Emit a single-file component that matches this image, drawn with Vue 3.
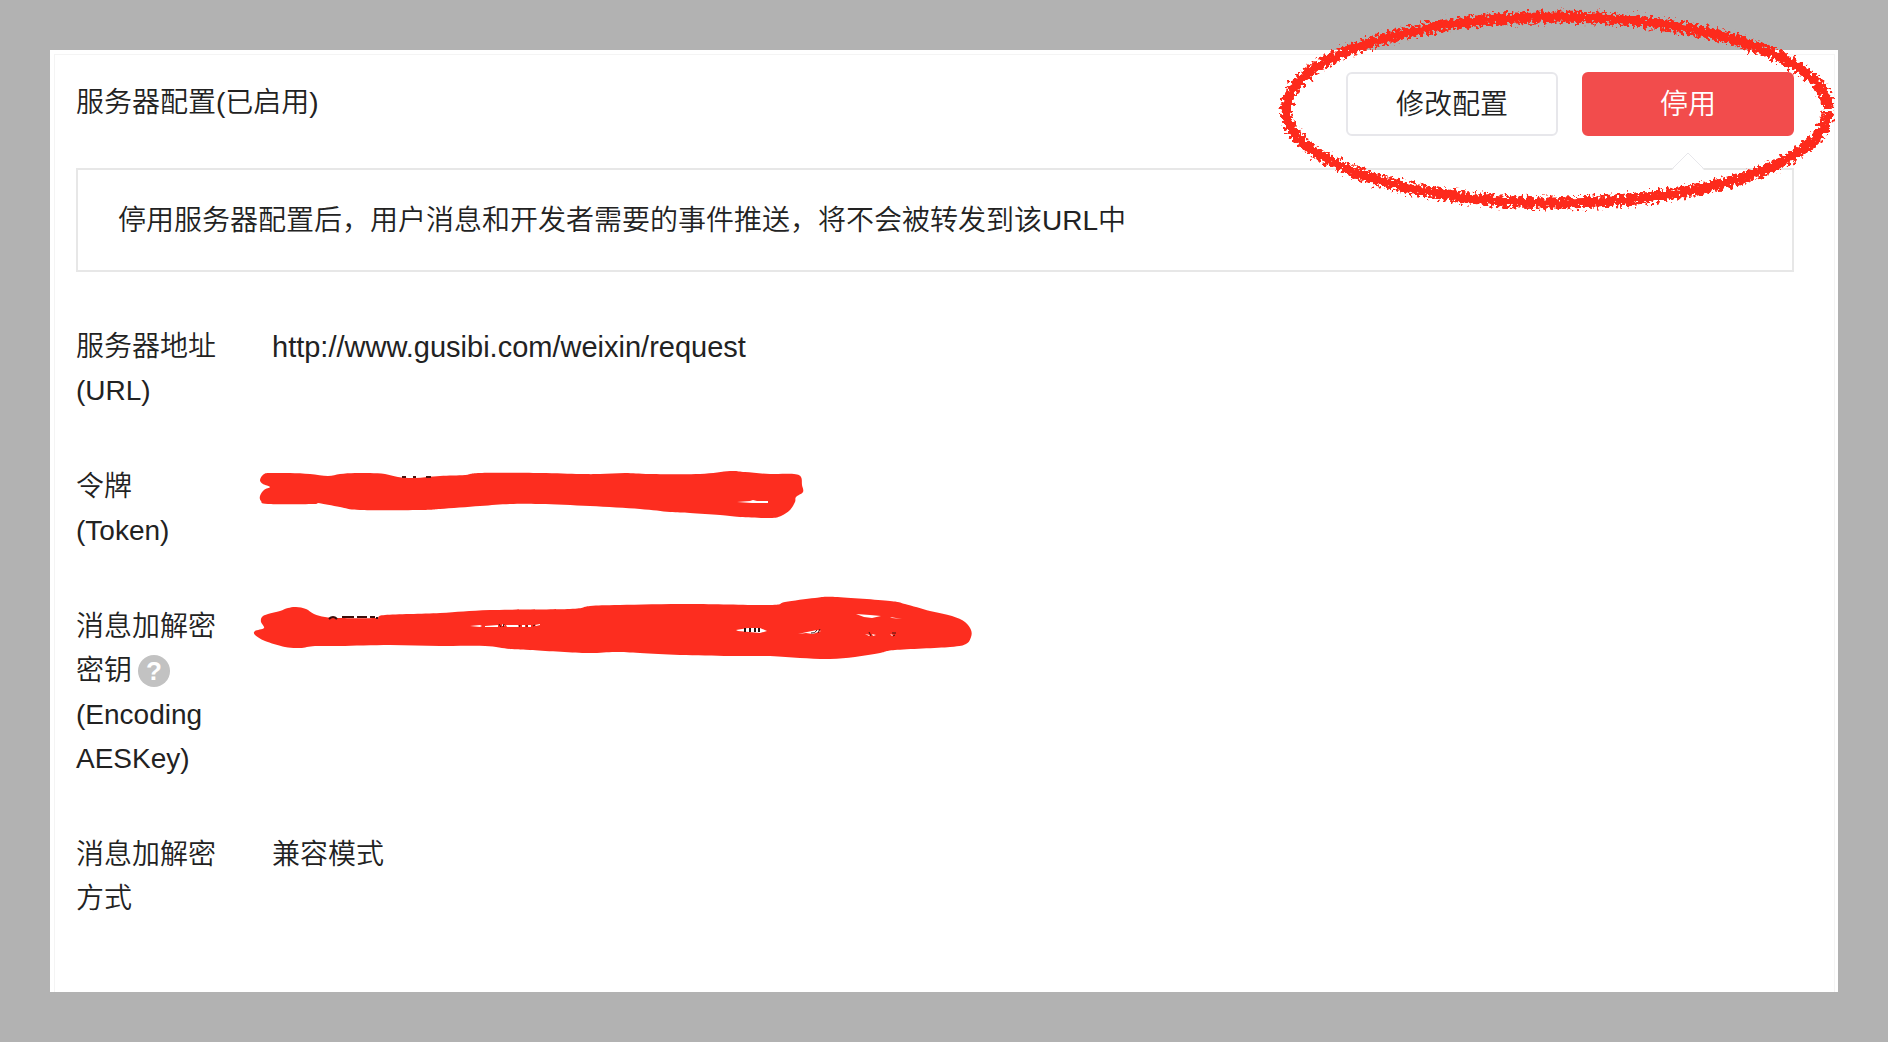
<script setup>
// Closed smooth outline through a list of points
function outline(points) {
  const n = points.length
  const at = (i) => points[(i + n) % n]
  let d = `M${points[0][0]} ${points[0][1]}`
  for (let i = 0; i < n; i++) {
    const [a, b, c, e] = [at(i - 1), at(i), at(i + 1), at(i + 2)]
    const c1 = [b[0] + (c[0] - a[0]) / 6, b[1] + (c[1] - a[1]) / 6]
    const c2 = [c[0] - (e[0] - b[0]) / 6, c[1] - (e[1] - b[1]) / 6]
    d += `C${c1.join(' ')} ${c2.join(' ')} ${c.join(' ')}`
  }
  return d + 'Z'
}

const tokenMark = outline([
  [20, 30], [24, 24], [32, 23], [50, 23], [70, 24], [88, 26], [100, 24], [115, 23], [130, 23], [145, 24],
  [158, 27], [175, 28], [200, 26], [225, 25], [240, 23], [300, 23], [340, 24], [360, 24], [385, 23],
  [410, 24], [460, 24], [490, 21], [505, 22], [530, 24], [554, 24], [561, 27], [562, 35], [563, 42],
  [556, 47], [555, 52], [550, 60], [541, 66], [530, 68], [500, 67], [480, 65], [450, 63], [430, 62],
  [400, 59], [350, 56], [300, 54], [270, 54], [240, 56], [200, 59], [180, 60], [120, 60], [100, 57],
  [78, 53], [74, 54], [28, 54], [21, 51], [20, 46], [24, 40], [30, 37], [23, 34],
])

const keyMark = outline([
  [21, 42], [22, 37], [28, 34], [40, 31], [48, 28], [56, 27], [66, 29], [74, 34], [85, 37], [100, 38],
  [135, 38], [145, 35], [200, 33], [250, 30], [330, 29], [350, 26], [380, 25], [450, 24], [530, 25],
  [545, 22], [575, 18], [595, 17], [650, 21], [665, 24], [690, 31], [712, 36], [725, 42], [731, 50],
  [731, 57], [726, 64], [710, 67], [655, 70], [640, 73], [615, 77], [590, 79], [560, 78], [530, 76],
  [490, 76], [440, 75], [400, 73], [375, 72], [345, 73], [290, 70], [270, 69], [245, 66],
  [200, 66], [150, 65], [100, 66], [75, 66], [60, 68], [45, 67], [25, 61], [15, 55], [15, 51], [24, 48],
])
</script>

<template>
  <div class="page" lang="zh-CN">
    <main class="card">
      <header class="head">
        <h1 class="title">服务器配置(已启用)</h1>
        <div class="actions">
          <button type="button" class="btn">修改配置</button>
          <button type="button" class="btn btn-warn">停用</button>
          <svg class="ring" width="580" height="220" viewBox="0 0 580 220" aria-hidden="true">
            <defs>
              <filter id="crayon" x="-5%" y="-10%" width="110%" height="120%">
                <feTurbulence type="fractalNoise" baseFrequency="0.3" numOctaves="2" seed="7" result="n" />
                <feDisplacementMap in="SourceGraphic" in2="n" scale="14" xChannelSelector="R" yChannelSelector="G" />
              </filter>
            </defs>
            <path
              d="M561 108A271 93 0 1 0 561 112"
              fill="none"
              stroke="#fd2a1b"
              stroke-width="11"
              filter="url(#crayon)"
            />
          </svg>
        </div>
      </header>

      <section class="notice">
        <svg class="arrow" width="32" height="18" viewBox="0 0 32 18" aria-hidden="true">
          <path d="M0 18 16 1 32 18Z" fill="#fff" />
          <path d="M0 17 16 1 32 17" fill="none" stroke="#e7e7eb" stroke-width="1" />
        </svg>
        <p>停用服务器配置后，用户消息和开发者需要的事件推送，将不会被转发到该URL中</p>
      </section>

      <dl class="list">
        <div class="row">
          <dt>服务器地址(URL)</dt>
          <dd class="url">http://www.gusibi.com/weixin/request</dd>
        </div>
        <div class="row">
          <dt>令牌 (Token)</dt>
          <dd>
            <svg class="mark" width="580" height="90" viewBox="0 0 580 90" role="img" aria-label="已隐藏">
              <path :d="tokenMark" fill="#fd2d1f" />
              <path d="M497 52 510 51 513 50 517 51 528 51 528 53 512 53Z" fill="#fff" />
              <path d="M162 27h4M173 27h3M186 27h5" stroke="#4a1410" stroke-width="2" />
            </svg>
          </dd>
        </div>
        <div class="row">
          <dt>
            <span>消息加解密</span><wbr /><span>密钥</span><button type="button" class="help" aria-label="帮助">?</button>
            <span>(Encoding AESKey)</span>
          </dt>
          <dd>
            <svg class="mark mark-key" width="750" height="100" viewBox="0 0 750 100" role="img" aria-label="已隐藏">
              <path :d="keyMark" fill="#fd2d1f" />
              <g fill="none" stroke="#3a0f0c" stroke-width="2">
                <path d="M89 39q4-4 8 0M102 37h12M117 37h10M130 37h5M137 37v2" />
              </g>
              <path d="M230 46l10-1 2 1-2 1ZM245 46l13-1v2h-13ZM262 46v-2l3 2ZM266 45h12l1 2h-12ZM282 45h3v2h-3ZM288 45h3v2h-3ZM295 45l5-1v1l-4 1Z" fill="#fff" />
              <path d="M259 44l2 3M264 44l-1 3M279 47l1-2M287 47v-2M293 46l2-1" fill="none" stroke="#4a1410" />
              <path d="M496 50 508 48 520 48 527 51 520 53 498 51Z" fill="#fff" />
              <path d="M505 48v4M510 48v4M515 48v4M519 48v4" fill="none" stroke="#27100e" stroke-width="2" />
              <path d="M558 54 567 52 577 50 581 51 573 54 566 53Z" fill="#fff" />
              <path d="M571 53q4 1 6-3M580 49l-2 4" fill="none" stroke="#4a1410" />
              <path d="M616 34 630 35 641 36 632 38 624 37ZM650 37l12 2-10-1Z" fill="#fff" />
              <path d="M625 54l5 1-1 1ZM632 54l4 1-3 1ZM650 54l3 1-1 1Z" fill="#fff" />
              <path d="M629 52l2 4M652 53h4M653 56l2-1" fill="none" stroke="#4a1410" />
            </svg>
          </dd>
        </div>
        <div class="row">
          <dt>消息加解密方式</dt>
          <dd>兼容模式</dd>
        </div>
      </dl>
    </main>
  </div>
</template>

<style>
body {
  margin: 0;
  background: #b2b2b2;
}
</style>

<style scoped>
.page {
  box-sizing: border-box;
  min-height: 100vh;
  padding: 50px;
  background: #b2b2b2;
  color: #222;
  font-family: "Liberation Sans", "Noto Sans CJK SC", sans-serif;
  font-size: 28px;
  font-weight: 350;
  line-height: 44px;
  overflow: hidden;
}
.card {
  padding: 22px 44px 71px 26px;
  background: #fff;
  box-shadow: inset 0 4px #fff, inset 4px 0 #fff, inset -3px 0 #fff, inset 0 5px #f4f4f4, inset 5px 0 #f4f4f4,
    inset -4px 0 #f4f4f4;
}
.head {
  display: flex;
  justify-content: space-between;
  align-items: center;
}
.title {
  margin: 0;
  padding-bottom: 2px;
  font-size: 28px;
  font-weight: inherit;
}
.actions {
  position: relative;
  display: flex;
  gap: 24px;
}
.btn {
  box-sizing: border-box;
  width: 212px;
  height: 64px;
  padding: 2px 0 0;
  border: 2px solid #e7e7eb;
  border-radius: 6px;
  background: #fff;
  color: #222;
  font: inherit;
}
.btn-warn {
  border-color: #f24c4c;
  background: #f24c4c;
  color: #fff;
}
.ring {
  position: absolute;
  top: -72px;
  right: -53px;
  pointer-events: none;
  z-index: 1;
}
.notice {
  position: relative;
  margin-top: 32px;
  padding: 29px 40px 27px;
  border: 2px solid #e7e7e7;
}
.notice p {
  margin: 0;
}
.arrow {
  position: absolute;
  top: -18px;
  right: 88px;
}
.list {
  display: flex;
  flex-direction: column;
  gap: 52px;
  margin: 53px 0 0;
}
.row {
  display: grid;
  grid-template-columns: 144px 1fr;
  gap: 52px;
}
dd {
  position: relative;
  margin: 0;
}
.url {
  font-size: 29px;
}
.mark {
  position: absolute;
  top: -15px;
  left: -32px;
}
.mark-key {
  top: -25px;
}
.help {
  width: 32px;
  height: 32px;
  margin-left: 6px;
  padding: 0;
  border: 0;
  border-radius: 50%;
  background: #c2c2c2;
  color: #fff;
  font: bold 26px/32px "Liberation Sans", sans-serif;
  vertical-align: baseline;
}
</style>
